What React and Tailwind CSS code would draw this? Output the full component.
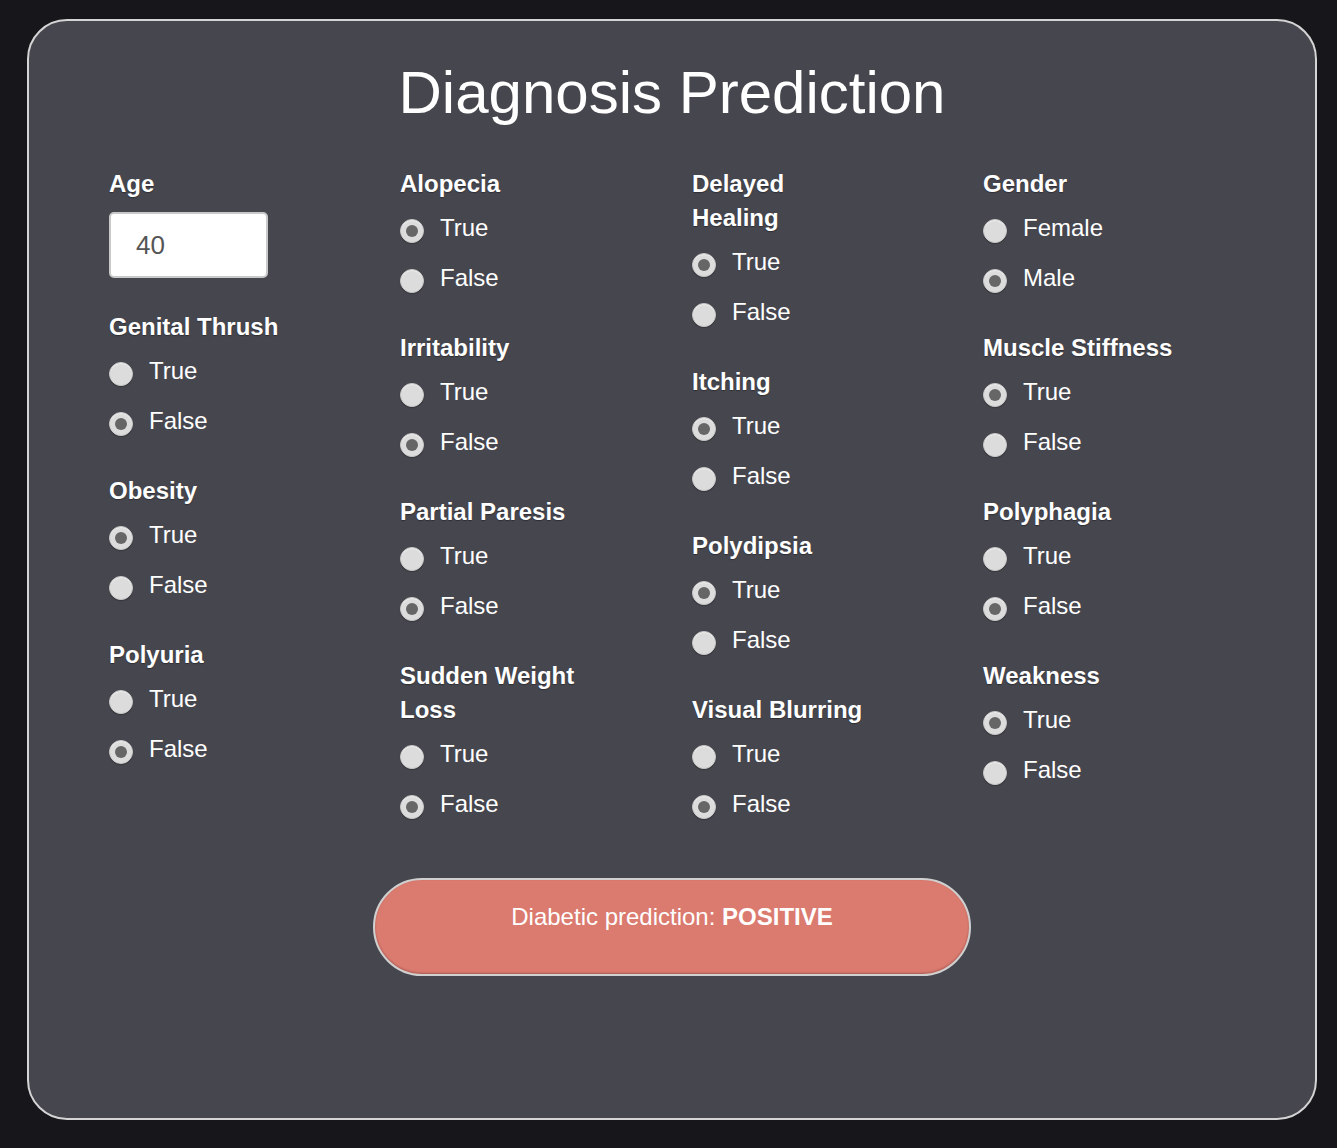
const groups = [
  [
    { label: 'Genital Thrush', options: ['True', 'False'], checked: 1 },
    { label: 'Obesity', options: ['True', 'False'], checked: 0 },
    { label: 'Polyuria', options: ['True', 'False'], checked: 1 },
  ],
  [
    { label: 'Alopecia', options: ['True', 'False'], checked: 0 },
    { label: 'Irritability', options: ['True', 'False'], checked: 1 },
    { label: 'Partial Paresis', options: ['True', 'False'], checked: 1 },
    { label: 'Sudden Weight Loss', options: ['True', 'False'], checked: 1 },
  ],
  [
    { label: 'Delayed Healing', options: ['True', 'False'], checked: 0, narrow: true },
    { label: 'Itching', options: ['True', 'False'], checked: 0 },
    { label: 'Polydipsia', options: ['True', 'False'], checked: 0 },
    { label: 'Visual Blurring', options: ['True', 'False'], checked: 1 },
  ],
  [
    { label: 'Gender', options: ['Female', 'Male'], checked: 1 },
    { label: 'Muscle Stiffness', options: ['True', 'False'], checked: 0 },
    { label: 'Polyphagia', options: ['True', 'False'], checked: 1 },
    { label: 'Weakness', options: ['True', 'False'], checked: 0 },
  ],
];

function Radio({ checked }) {
  return (
    <span className="mt-[5px] flex h-[24px] w-[24px] shrink-0 items-center justify-center rounded-full border border-[#c8c8c8] bg-[#dcdcdc] shadow-[inset_0_1px_1px_rgba(255,255,255,0.6),0_1px_1px_rgba(0,0,0,0.25)]">
      {checked && <span className="h-[12px] w-[12px] rounded-full bg-[#666666]" />}
    </span>
  );
}

function Group({ label, options, checked, narrow }) {
  return (
    <div className="mb-[36px]">
      <div
        className={
          narrow
            ? 'w-[150px] text-[24px] font-bold leading-[34px] text-white [text-shadow:0_1px_1px_rgba(0,0,0,0.35)]'
            : 'w-[200px] text-[24px] font-bold leading-[34px] text-white [text-shadow:0_1px_1px_rgba(0,0,0,0.35)]'
        }
      >
        {label}
      </div>
      <div className="mt-[10px] flex flex-col gap-[16px]">
        {options.map((o, i) => (
          <div key={o} className="flex h-[34px] items-center gap-[16px]">
            <Radio checked={i === checked} />
            <span className="text-[24px] leading-[34px] text-white">{o}</span>
          </div>
        ))}
      </div>
    </div>
  );
}

export default function App() {
  return (
    <div className="min-h-[1148px] bg-[#17161b] px-[27px] pt-[19px] font-['Liberation_Sans',Arial,sans-serif]">
      <div className="h-[1101px] w-[1290px] rounded-[40px] border-2 border-[#d4d4d4] bg-[#46464e] pt-[37px]">
        <h1 className="text-center text-[60px] leading-[70px] text-white">Diagnosis Prediction</h1>
        <div className="mt-[39px] grid grid-cols-[291px_292px_291px_291px] pl-[80px]">
          <div>
            <div className="mb-[32px]">
              <div className="text-[24px] font-bold leading-[34px] text-white [text-shadow:0_1px_1px_rgba(0,0,0,0.35)]">Age</div>
              <div className="mt-[11px] flex h-[66px] w-[159px] items-center rounded-[5px] border-2 border-[#c9c9c9] bg-white pl-[25px] text-[26px] text-[#555555]">
                40
              </div>
            </div>
            {groups[0].map((g) => (
              <Group key={g.label} {...g} />
            ))}
          </div>
          {groups.slice(1).map((col, ci) => (
            <div key={ci}>
              {col.map((g) => (
                <Group key={g.label} {...g} />
              ))}
            </div>
          ))}
        </div>
        <div className="mt-[21px] flex justify-center">
          <div className="h-[98px] w-[598px] rounded-full border-2 border-[#d0d0d0] bg-[#db7a6f] pt-[22px] text-center text-[24px] leading-[30px] text-white shadow-[inset_0_-1px_2px_rgba(0,0,0,0.25)]">
            Diabetic prediction: <b>POSITIVE</b>
          </div>
        </div>
      </div>
    </div>
  );
}
